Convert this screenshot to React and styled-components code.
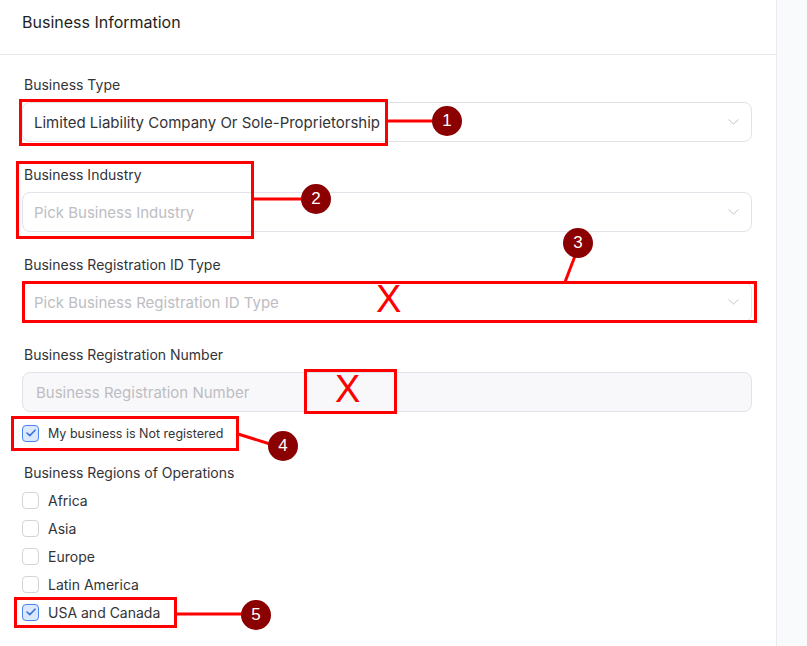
import React from "react";
import styled, { createGlobalStyle } from "styled-components";

const Global = createGlobalStyle`
  html, body { margin: 0; padding: 0; background: #f9fafb; }
  body { font-family: Inter, "Noto Sans", sans-serif; color: #333; }
  #root { width: 807px; height: 646px; overflow: hidden; }
`;

const Page = styled.div`
  position: relative;
  width: 807px;
  height: 646px;
  display: flex;
  background: #f9fafb;
`;

const Card = styled.section`
  width: 776px;
  height: 100%;
  background: #fff;
  border-right: 1px solid #e9e9ef;
  display: flex;
  flex-direction: column;
`;

const Header = styled.header`
  height: 55px;
  box-sizing: border-box;
  border-bottom: 1px solid #e8e8ec;
  padding: 12px 22px 0;
  font-size: 16px;
  line-height: 20px;
  color: #1f1f23;
`;

const Form = styled.div`
  padding: 20px 24px 0 22px;
  display: flex;
  flex-direction: column;
`;

const Field = styled.div`
  display: flex;
  flex-direction: column;
  margin-bottom: ${(p) => p.$mb ?? 23}px;
`;

const Label = styled.div`
  font-size: 14px;
  line-height: 20px;
  color: #333338;
  padding-left: 2px;
  margin-bottom: ${(p) => p.$mb ?? 7}px;
`;

const Control = styled.div`
  height: 40px;
  box-sizing: border-box;
  border: 1px solid #e2e2e8;
  border-radius: 8px;
  background: ${(p) => (p.$disabled ? "#f8f8fa" : "#fff")};
  display: flex;
  align-items: center;
  justify-content: space-between;
  padding: 0 12px 0 ${(p) => (p.$disabled ? 13 : 11)}px;
  font-size: 15px;
  color: ${(p) => (p.$placeholder ? "#bdbdc2" : "#333338")};
`;

const Chevron = () => (
  <svg width="11" height="6" viewBox="0 0 11 6" fill="none">
    <path d="M0.5 0.5 L5.5 5 L10.5 0.5" stroke="#c4c4ca" strokeWidth="1" />
  </svg>
);

const CheckRow = styled.label`
  display: flex;
  align-items: center;
  gap: 9px;
  height: 20px;
  font-size: ${(p) => (p.$small ? 12.5 : 14)}px;
  color: #333338;
  margin-top: ${(p) => p.$mt ?? 0}px;
  margin-bottom: ${(p) => p.$mb ?? 8}px;
`;

const Box = styled.span`
  width: 17px;
  height: 17px;
  box-sizing: border-box;
  border-radius: 4px;
  border: 1px solid ${(p) => (p.$checked ? "#4a86f0" : "#d3d3da")};
  background: ${(p) => (p.$checked ? "#dce8fc" : "#fff")};
  display: flex;
  align-items: center;
  justify-content: center;
`;

const Check = ({ checked }) => (
  <Box $checked={checked}>
    {checked && (
      <svg width="10" height="8" viewBox="0 0 10 8" fill="none">
        <path d="M1 4 L3.8 6.6 L9 1.2" stroke="#3a72dc" strokeWidth="1.6" strokeLinecap="round" strokeLinejoin="round" />
      </svg>
    )}
  </Box>
);

/* ---------- annotation overlay ---------- */
const Overlay = styled.div`
  position: absolute;
  inset: 0;
  pointer-events: none;
`;

const RedBox = styled.div`
  position: absolute;
  box-sizing: border-box;
  border: 3px solid #ff0000;
`;

const Badge = styled.div`
  position: absolute;
  width: 30px;
  height: 30px;
  margin: -15px 0 0 -15px;
  border-radius: 50%;
  background: #8b0000;
  color: #fff;
  font-family: "Liberation Sans", Arial, sans-serif;
  font-size: 17px;
  display: flex;
  align-items: center;
  justify-content: center;
`;

const Cross = styled.div`
  position: absolute;
  font-family: "Liberation Sans", Arial, sans-serif;
  font-size: 38px;
  line-height: 1;
  color: #ff0000;
`;

const Lines = styled.svg`
  position: absolute;
  left: 0;
  top: 0;
`;

const regions = [
  ["Africa", false],
  ["Asia", false],
  ["Europe", false],
  ["Latin America", false],
  ["USA and Canada", true],
];

export default function App() {
  return (
    <Page>
      <Global />
      <Card>
        <Header>Business Information</Header>
        <Form>
          <Field>
            <Label>Business Type</Label>
            <Control>
              <span>Limited Liability Company Or Sole-Proprietorship</span>
              <Chevron />
            </Control>
          </Field>
          <Field>
            <Label>Business Industry</Label>
            <Control $placeholder>
              <span>Pick Business Industry</span>
              <Chevron />
            </Control>
          </Field>
          <Field>
            <Label>Business Registration ID Type</Label>
            <Control $placeholder>
              <span>Pick Business Registration ID Type</span>
              <Chevron />
            </Control>
          </Field>
          <Field $mb={0}>
            <Label>Business Registration Number</Label>
            <Control $placeholder $disabled>
              <span>Business Registration Number</span>
            </Control>
          </Field>
          <CheckRow $small $mt={11} $mb={20}>
            <Check checked />
            My business is Not registered
          </CheckRow>
          <Label>Business Regions of Operations</Label>
          {regions.map(([name, checked]) => (
            <CheckRow key={name}>
              <Check checked={checked} />
              {name}
            </CheckRow>
          ))}
        </Form>
      </Card>

      <Overlay>
        <Lines width="807" height="646">
          <g stroke="#ff0000" strokeWidth="3">
            <line x1="387" y1="121" x2="434" y2="121" />
            <line x1="253" y1="199" x2="302" y2="199" />
            <line x1="575" y1="256" x2="565" y2="282" />
            <line x1="238" y1="434" x2="270" y2="444" />
            <line x1="176" y1="614" x2="242" y2="614" />
          </g>
        </Lines>
        <RedBox style={{ left: 19, top: 99, width: 369, height: 47 }} />
        <RedBox style={{ left: 16, top: 161, width: 238, height: 78 }} />
        <RedBox style={{ left: 22, top: 281, width: 735, height: 42 }} />
        <RedBox style={{ left: 304, top: 369, width: 93, height: 45 }} />
        <RedBox style={{ left: 11, top: 416, width: 228, height: 35 }} />
        <RedBox style={{ left: 14, top: 597, width: 163, height: 31 }} />
        <Cross style={{ left: 376, top: 280 }}>X</Cross>
        <Cross style={{ left: 335, top: 370 }}>X</Cross>
        <Badge style={{ left: 447, top: 121 }}>1</Badge>
        <Badge style={{ left: 316, top: 199 }}>2</Badge>
        <Badge style={{ left: 578, top: 243 }}>3</Badge>
        <Badge style={{ left: 283, top: 446 }}>4</Badge>
        <Badge style={{ left: 256, top: 615 }}>5</Badge>
      </Overlay>
    </Page>
  );
}
